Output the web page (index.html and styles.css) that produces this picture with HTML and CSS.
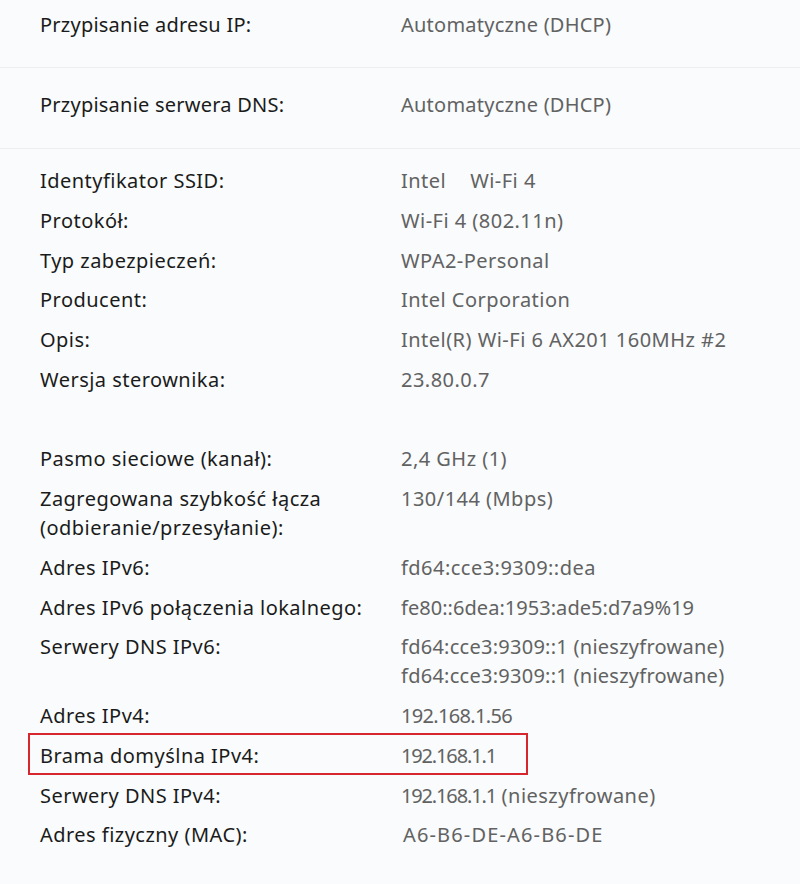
FILE: index.html
```html
<!DOCTYPE html>
<html lang="pl">
<head>
<meta charset="utf-8">
<link rel="stylesheet" href="styles.css">
<title>Właściwości sieci</title>
</head>
<body>
<main class="panel">
  <section class="section section-first">
    <div class="row row-top"><span class="label">Przypisanie adresu IP:</span><span class="value">Automatyczne (DHCP)</span></div>
  </section>
  <section class="section section-second">
    <div class="row row-top"><span class="label">Przypisanie serwera DNS:</span><span class="value">Automatyczne (DHCP)</span></div>
  </section>
  <section class="section section-list">
    <div class="row"><span class="label">Identyfikator SSID:</span><span class="value">Intel<span class="redacted"></span>Wi-Fi 4</span></div>
    <div class="row"><span class="label">Protokół:</span><span class="value">Wi-Fi 4 (802.11n)</span></div>
    <div class="row"><span class="label">Typ zabezpieczeń:</span><span class="value">WPA2-Personal</span></div>
    <div class="row"><span class="label">Producent:</span><span class="value">Intel Corporation</span></div>
    <div class="row"><span class="label">Opis:</span><span class="value">Intel(R) Wi-Fi 6 AX201 160MHz #2</span></div>
    <div class="row"><span class="label">Wersja sterownika:</span><span class="value">23.80.0.7</span></div>
    <div class="row row-empty"><span class="label"></span><span class="value"></span></div>
    <div class="row"><span class="label">Pasmo sieciowe (kanał):</span><span class="value">2,4 GHz (1)</span></div>
    <div class="row"><span class="label">Zagregowana szybkość łącza<br>(odbieranie/przesyłanie):</span><span class="value">130/144 (Mbps)</span></div>
    <div class="row"><span class="label">Adres IPv6:</span><span class="value">fd64:cce3:9309::dea</span></div>
    <div class="row"><span class="label">Adres IPv6 połączenia lokalnego:</span><span class="value value-link">fe80::6dea:1953:ade5:d7a9%19</span></div>
    <div class="row"><span class="label">Serwery DNS IPv6:</span><span class="value value-dns6">fd64:cce3:9309::1 (nieszyfrowane)<br>fd64:cce3:9309::1 (nieszyfrowane)</span></div>
    <div class="row"><span class="label">Adres IPv4:</span><span class="value value-ipv4">192.168.1.56</span></div>
    <div class="row row-highlight"><span class="label">Brama domyślna IPv4:</span><span class="value"><span class="num-gw">192.168.1.1</span></span></div>
    <div class="row"><span class="label">Serwery DNS IPv4:</span><span class="value"><span class="num-gw">192.168.1.1</span> (nieszyfrowane)</span></div>
    <div class="row"><span class="label">Adres fizyczny (MAC):</span><span class="value value-mac">A6-B6-DE-A6-B6-DE</span></div>
  </section>
</main>
</body>
</html>
```

FILE: styles.css
```css
html, body {
  margin: 0;
  padding: 0;
  background: #f9fbfc;
}

body {
  width: 800px;
  height: 884px;
  overflow: hidden;
  font-family: "Noto Sans", "Open Sans", sans-serif;
  font-size: 20px;
  letter-spacing: 0.47px;
  color: #1b1b1b;
}

.panel {
  display: flex;
  flex-direction: column;
}

.section {
  border-bottom: 1px solid #eceef0;
  padding-left: 40px;
}

.section-first {
  padding-top: 10px;
  padding-bottom: 28px;
}

.section-second {
  padding-top: 22px;
  padding-bottom: 29px;
}

.section-list {
  border-bottom: none;
  padding-top: 17px;
  display: flex;
  flex-direction: column;
  gap: 10.75px;
}

.row {
  display: flex;
  line-height: 29px;
}

.row-top {
  letter-spacing: 0.23px;
}

.label {
  width: 361px;
  flex-shrink: 0;
  white-space: nowrap;
}

.value {
  color: #626262;
  white-space: nowrap;
}

.value-link {
  letter-spacing: 0.04px;
}

.value-dns6 {
  letter-spacing: 0.26px;
}

.value-ipv4 {
  letter-spacing: -0.67px;
}

.num-gw {
  letter-spacing: -1.15px;
}

.value-mac {
  padding-left: 2px;
  letter-spacing: 1.15px;
}

.redacted {
  display: inline-block;
  width: 24px;
}

.row-empty {
  height: 29px;
}

.row-highlight {
  position: relative;
}

.row-highlight::after {
  content: "";
  position: absolute;
  left: -12px;
  top: -7.5px;
  width: 496px;
  height: 38px;
  border: 2px solid #d7262d;
}
```
